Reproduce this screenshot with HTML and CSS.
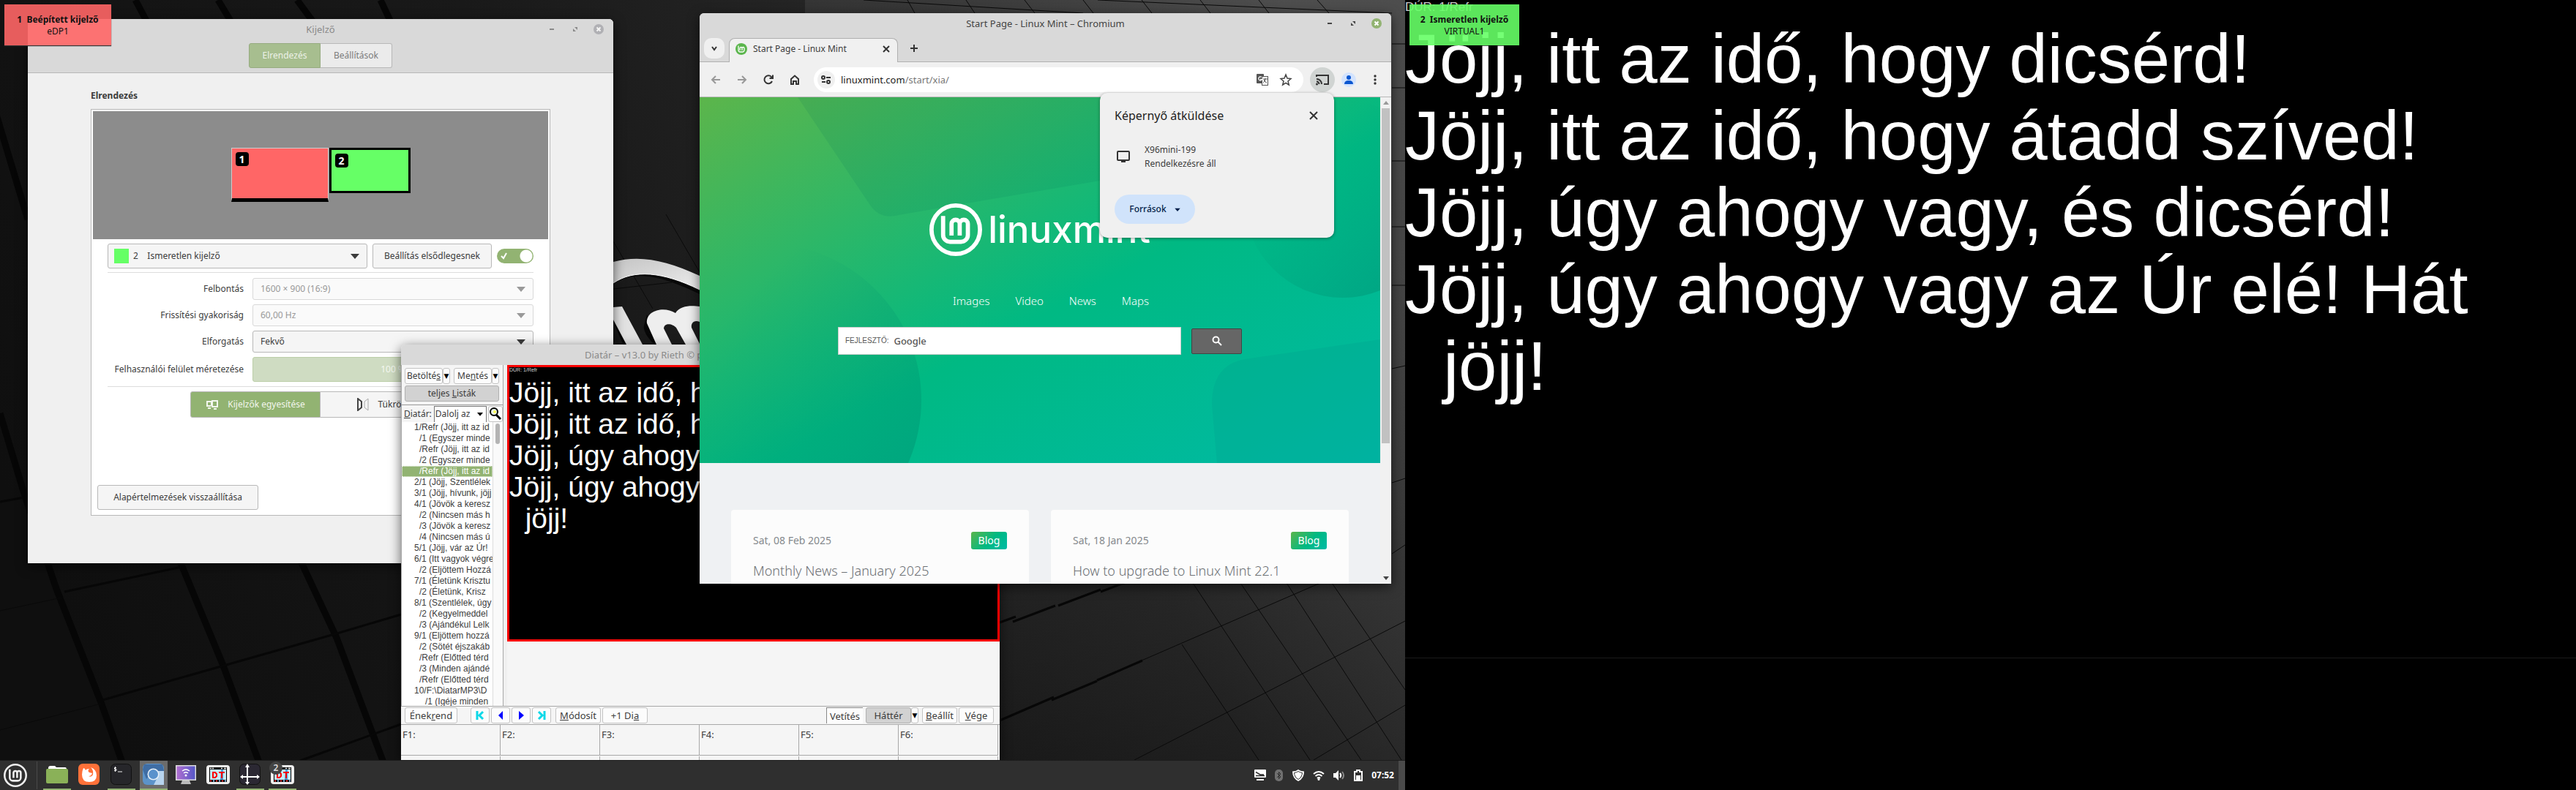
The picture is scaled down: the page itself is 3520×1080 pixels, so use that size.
FILE: index.html
```html
<!DOCTYPE html>
<html lang="hu">
<head>
<meta charset="utf-8">
<title>Asztal</title>
<link rel="stylesheet" href="styles.css">
</head>
<body>
<svg class="defs" width="0" height="0" aria-hidden="true">
  <symbol id="mint" viewBox="0 0 100 100">
    <g fill="none" stroke="currentColor" stroke-width="8" stroke-linecap="butt">
      <circle cx="50" cy="50" r="46"/>
      <path d="M26 24V60a13 13 0 0 0 13 13H60a13 13 0 0 0 13-13V39a7.75 7.75 0 0 0-15.500 0V61M57.500 39a7.750 7.750 0 0 0-15.500 0V61"/>
    </g>
  </symbol>
  <symbol id="tri" viewBox="0 0 12 8"><path d="M0 1h12L6 8z" fill="currentColor"/></symbol>
  <symbol id="dt" viewBox="0 0 32 28">
    <rect x="0" y="1" width="32" height="26" rx="4" fill="#eee"/>
    <rect x="4" y="4" width="24" height="20" fill="#000"/>
    <rect x="5" y="7" width="22" height="14" fill="#c4ecfa"/>
    <path d="M20 7h3v14h-4z" fill="#4d9fd8"/>
    <path d="M9 11h3l2 2v3l-2 2H9zM17 11h8M21 11v8" fill="none" stroke="#f00" stroke-width="2"/>
    <path d="M5 5.500h2M8 5.500h2M20 5.500h2M24 5.500h3" stroke="#fff" stroke-width="1.500"/>
    <path d="M5 22.500h2M13 22.500h2M21 22.500h2" stroke="#e33" stroke-width="2"/>
    <path d="M9 22.500h2M17 22.500h2M25 22.500h2" stroke="#9cf" stroke-width="2"/>
  </symbol>
</svg>

<main class="desk">
<section class="screen screen-main">
  <svg class="wallpaper" viewBox="0 0 1920 1080" preserveAspectRatio="xMidYMid slice" aria-hidden="true">
    <defs>
      <linearGradient id="wall" x1="0" y1=".6" x2="1" y2=".35">
        <stop offset="0" stop-color="#0f0f0f"/><stop offset=".45" stop-color="#191919"/>
        <stop offset=".75" stop-color="#282828"/><stop offset="1" stop-color="#454545"/>
      </linearGradient>
      <linearGradient id="fade" x1="0" y1="0" x2="0" y2="1">
        <stop offset="0" stop-color="#666" stop-opacity=".25"/><stop offset=".4" stop-color="#444" stop-opacity=".1"/><stop offset="1" stop-color="#000" stop-opacity=".25"/>
      </linearGradient>
      <linearGradient id="steel" x1="0" y1="0" x2="1" y2="1">
        <stop offset="0" stop-color="#c4c4c4"/><stop offset="1" stop-color="#ededed"/>
      </linearGradient>
    </defs>
    <rect width="1920" height="1080" fill="url(#wall)"/>
    <rect x="1100" width="820" height="1080" fill="url(#fade)"/>
    <g fill="none" stroke="#060606" stroke-width="9">
      <path d="M0 565L33 675L77 805L138 960L168 1045M185 0l16 30M298 0l18 30M406 0l22 30M520 0l14 30"/>
      <path d="M245 765L305 910L355 1045M410 765L460 872L525 1045M-4 160L38 300"/>
    </g>
    <g fill="none" stroke="#070707" stroke-width="3">
      <path d="M88 809L248 775M140 957L302 911L457 867L548 840M410 1040L548 990M0 686L33 680M1366 851l22-8M1384 850l58-22M1446 828l58-22M1504 809l34-13"/>
      <path d="M1366 985l74-32M1437 957l62-26M1499 930l62-27"/>
    </g>
    <g fill="none" stroke="#0a0a0a" stroke-width="1">
      <path d="M0 835L84 817M0 998L138 962M1560 903L1804 797M1550 1039L1920 849M1795 1039L1920 964M1630 797L1790 1039M1695 797L1860 1039M1758 797L1915 1039M1820 797L1920 943M1615 881L1720 1039M1902 660L1920 654M1902 757L1920 745M1902 504L1920 500M1180 0L1480 18M1500 0L1902 18M1902 60h18M1902 120h18M1902 220h18M1902 310h18M1902 390h18M910 293L956 372M838 330L892 422M838 395L918 386"/>
      <path d="M1240 0l10 18M1320 0l12 18M1400 0l14 18M1480 0l14 18M1560 0l14 18M1640 0l14 18M1720 0l14 18M1800 0l16 18"/>
    </g>
    <path d="M838 388C866 370 900 375 956 402V388C906 364 870 362 838 380Z" fill="#080808"/>
    <path d="M838 358C875 348 910 356 956 377V396C905 371 866 368 838 387Z" fill="url(#steel)"/>
    <path d="M838 387C866 368 905 371 956 396" fill="none" stroke="#fff" stroke-width="1"/>
    <path d="M838 440L852 472H862L845 430ZM880 445Q878 455 895 472H906L884 430Z" fill="#070707"/>
    <path d="M838 420L850 419L878 471H856L838 437Z" fill="#e2e2e2"/>
    <path d="M884 442C882 424 908 418 923 428C930 416 948 418 956 419V440C948 437 944 442 945 448L956 470V471H937L924 448C920 443 908 440 907 449L918 471H897Z" fill="#eee"/>
  </svg>

  <!-- Display settings -->
  <article class="window settings">
    <header class="settings-head">
      <div class="titlebar faded">
        <h1>Kijelző</h1>
        <div class="wm">
          <button aria-label="Kis méret"><svg width="16" height="16"><path d="M5 8h6" stroke="currentColor" stroke-width="2"/></svg></button>
          <button aria-label="Teljes méret"><svg width="16" height="16"><path d="M7 5h4v4zM9 11H5V7z" fill="currentColor"/></svg></button>
          <button aria-label="Bezárás"><svg width="16" height="16"><circle cx="8" cy="8" r="7" fill="#b0b0b4"/><path d="M5.500 5.500l5 5m0-5l-5 5" stroke="#f4f4f4" stroke-width="2"/></svg></button>
        </div>
      </div>
      <div class="switcher"><button class="on">Elrendezés</button><button>Beállítások</button></div>
    </header>
    <div class="settings-body">
      <h2>Elrendezés</h2>
      <div class="frame">
        <div class="canvas">
          <div class="mon mon-1"><b>1</b></div>
          <div class="mon mon-2"><b>2</b></div>
        </div>
        <div class="form">
          <div class="row-top">
            <label class="combo"><i class="swatch"></i><select aria-label="Kijelző"><option>2 &nbsp;&nbsp; Ismeretlen kijelző</option></select><svg class="caret"><use href="#tri"/></svg></label>
            <button class="btn">Beállítás elsődlegesnek</button>
            <label class="toggle"><input type="checkbox" checked aria-label="Kijelző bekapcsolva"><svg width="10" height="10"><path d="M1 5l3 3 4-7" fill="none" stroke="#fff" stroke-width="2"/></svg></label>
          </div>
          <div class="fields">
            <label for="res">Felbontás</label>
            <div class="combo off"><select id="res" disabled><option>1600 × 900 (16:9)</option></select><svg class="caret"><use href="#tri"/></svg></div>
            <label for="rate">Frissítési gyakoriság</label>
            <div class="combo off"><select id="rate" disabled><option>60,00 Hz</option></select><svg class="caret"><use href="#tri"/></svg></div>
            <label for="rot">Elforgatás</label>
            <div class="combo"><select id="rot"><option>Fekvő</option></select><svg class="caret"><use href="#tri"/></svg></div>
            <label for="scale">Felhasználói felület méretezése</label>
            <button id="scale" class="scale" disabled>100 %</button>
          </div>
          <div class="modes">
            <button class="on"><svg width="18" height="14"><path d="M7 9H2V3h6v6M9 2h7v8H9zM3 12h4M11 13h4" fill="none" stroke="currentColor" stroke-width="2"/></svg>Kijelzők egyesítése</button>
            <button><svg width="18" height="18"><path d="M2 1v16l5-4V5z" fill="none" stroke="#444" stroke-width="2"/><path d="M16 1v16l-5-4V5z" fill="none" stroke="#aaa"/></svg>Tükrözés</button>
          </div>
        </div>
        <button class="btn reset">Alapértelmezések visszaállítása</button>
      </div>
    </div>
  </article>

  <!-- Diatár -->
  <article class="window diatar">
    <header class="titlebar faded"><h1>Diatár – v13.0 by Rieth © polyjoe</h1></header>
    <div class="d-main">
      <aside class="d-side">
        <div class="d-tools">
          <div class="d-line"><button class="b w52">Betölté<u>s</u></button><button class="b drop">▼</button><span class="sp"></span><button class="b w52">Me<u>n</u>tés</button><button class="b drop">▼</button></div>
          <button class="b pressed full">teljes&nbsp;<u>L</u>isták</button>
        </div>
        <div class="d-pick">
          <label for="book"><u>D</u>iatár:</label>
          <span class="pick"><select id="book"><option>Dalolj az</option></select><svg class="caret"><use href="#tri"/></svg></span>
          <button class="b find" aria-label="Keresés"><svg width="18" height="18"><path d="M10 10l6 6" stroke="#000" stroke-width="3"/><circle cx="7" cy="6" r="5" fill="#e8f4e8" stroke="#000" stroke-width="2"/><circle cx="8" cy="6" r="2" fill="#ff5"/></svg></button>
        </div>
        <div class="d-listwrap">
          <ul class="d-list" role="listbox" aria-label="Diák">
            <li>1/Refr (Jöjj, itt az id</li><li class="s">/1 (Egyszer minde</li><li class="s">/Refr (Jöjj, itt az id</li><li class="s">/2 (Egyszer minde</li><li class="s sel" role="option" aria-selected="true">/Refr (Jöjj, itt az id</li>
            <li>2/1 (Jöjj, Szentlélek</li><li>3/1 (Jöjj, hívunk, jöjj</li><li>4/1 (Jövök a keresz</li><li class="s">/2 (Nincsen más h</li><li class="s">/3 (Jövök a keresz</li><li class="s">/4 (Nincsen más ú</li><li>5/1 (Jöjj, vár az Úr!</li><li>6/1 (Itt vagyok végre</li><li class="s">/2 (Eljöttem Hozzá</li><li>7/1 (Életünk Krisztu</li><li class="s">/2 (Életünk, Krisz</li><li>8/1 (Szentlélek, úgy</li><li class="s">/2 (Kegyelmeddel</li><li class="s">/3 (Ajándékul Lelk</li><li>9/1 (Eljöttem hozzá</li><li class="s">/2 (Sötét éjszakáb</li><li class="s">/Refr (Előtted térd</li><li class="s">/3 (Minden ajándé</li><li class="s">/Refr (Előtted térd</li><li>10/F:\DiatarMP3\D</li><li class="ss">/1 (Igéje minden</li>
          </ul>
          <div class="d-scroll"><i></i></div>
        </div>
      </aside>
      <div class="d-view">
        <div class="slide small">
          <p class="tag">DÚR: 1/Refr</p>
          <p class="verse">Jöjj, itt az idő, hogy dicsérd!
Jöjj, itt az idő, hogy átadd szíved!
Jöjj, úgy ahogy vagy, és dicsérd!
Jöjj, úgy ahogy vagy az Úr elé! Hát
  jöjj!</p>
        </div>
      </div>
    </div>
    <div class="d-bar">
      <button class="b w72">Ének<u>r</u>end</button>
      <div class="nav4">
        <button class="b w26" aria-label="Első"><svg width="12" height="14"><path d="M2 1v12M10 2L5 7l5 5" fill="none" stroke="#0cd8e8" stroke-width="3"/></svg></button>
        <button class="b w26" aria-label="Előző"><svg width="12" height="14"><path d="M9 1v12L3 7z" fill="#00f"/></svg></button>
        <button class="b w26" aria-label="Következő"><svg width="12" height="14"><path d="M3 1v12l7-6z" fill="#00f"/></svg></button>
        <button class="b w26" aria-label="Utolsó"><svg width="12" height="14"><path d="M10 1v12M2 2l5 5-5 5" fill="none" stroke="#0cd8e8" stroke-width="3"/></svg></button>
      </div>
      <button class="b w62"><u>M</u>ódosít</button><button class="b w62">+1&nbsp;Di<u>a</u></button>
      <span class="grow"></span>
      <button class="sunk">Vetítés</button><div class="pair"><button class="b pressed w62">Háttér</button><button class="b drop">▼</button></div>
      <button class="b w48"><u>B</u>eállít</button><button class="b w48"><u>V</u>ége</button>
    </div>
    <div class="d-keys"><span>F1:</span><span>F2:</span><span>F3:</span><span>F4:</span><span>F5:</span><span>F6:</span><span></span><span></span><span></span><span></span><span></span><span></span></div>
  </article>

  <!-- Chromium -->
  <article class="window chromium">
    <header class="titlebar">
      <h1>Start Page - Linux Mint – Chromium</h1>
      <div class="wm">
        <button aria-label="Kis méret"><svg width="16" height="16"><path d="M5 8h6" stroke="currentColor" stroke-width="2"/></svg></button>
        <button aria-label="Teljes méret"><svg width="16" height="16"><path d="M7 5h4v4zM9 11H5V7z" fill="currentColor"/></svg></button>
        <button aria-label="Bezárás"><svg width="16" height="16"><circle cx="8" cy="8" r="7" fill="#92b372"/><path d="M5.500 5.500l5 5m0-5l-5 5" stroke="#fff" stroke-width="2"/></svg></button>
      </div>
    </header>
    <div class="tabs">
      <button class="tabmenu" aria-label="Lapok keresése"><svg width="10" height="10"><path d="M2 3l3 4 3-4" fill="none" stroke="#333" stroke-width="2"/></svg></button>
      <div class="tab"><span class="fav"><svg width="16" height="16" viewBox="0 0 16 16"><path d="M4 3.500v6a2.500 2.500 0 0 0 2.500 2.500h3a2.500 2.500 0 0 0 2.500-2.500V7a1.500 1.500 0 0 0-3 0v3M9 7a1.500 1.500 0 0 0-3 0v3" fill="none" stroke="#fff" stroke-width="1.300"/></svg></span><span class="tabname">Start Page - Linux Mint</span><button aria-label="Lap bezárása"><svg width="10" height="10"><path d="M1 1l8 8M9 1L1 9" stroke="#333" stroke-width="2"/></svg></button></div>
      <button class="plus" aria-label="Új lap"><svg width="12" height="12"><path d="M6 1v10M1 6h10" stroke="#333" stroke-width="2"/></svg></button>
    </div>
    <div class="toolbar">
      <div class="navs">
        <button class="dim" aria-label="Vissza"><svg width="16" height="16"><path d="M14 8H3M8 3L3 8l5 5" fill="none" stroke="currentColor" stroke-width="2"/></svg></button>
        <button class="dim" aria-label="Előre"><svg width="16" height="16"><path d="M2 8h11M8 3l5 5-5 5" fill="none" stroke="currentColor" stroke-width="2"/></svg></button>
        <button aria-label="Újratöltés"><svg width="16" height="16"><path d="M13 10a5.500 5.500 0 1 1-1-6l1.500 1.500M14 1.500V6H9.500" fill="none" stroke="currentColor" stroke-width="2"/></svg></button>
        <button aria-label="Kezdőlap"><svg width="16" height="16"><path d="M3 7l5-4.500L13 7v7h-3v-4H6v4H3z" fill="none" stroke="currentColor" stroke-width="2"/></svg></button>
      </div>
      <div class="omni">
        <button class="site" aria-label="Webhelyadatok"><svg width="14" height="14"><g fill="none" stroke="#333" stroke-width="2"><circle cx="3" cy="4" r="2"/><path d="M7 4h6M1 10h5"/><circle cx="10" cy="10" r="2"/></g></svg></button>
        <label class="url">linuxmint.com<span>/start/xia/</span></label>
        <button aria-label="Fordítás"><svg width="18" height="18"><rect x="1" y="1" width="10" height="13" rx="1" fill="#555"/><rect x="8.500" y="4.500" width="8" height="12" fill="#fff" stroke="#555"/><path d="M8 5.500a2.500 2.500 0 1 0 .5 3H6" fill="none" stroke="#fff" stroke-width="1.300"/><path d="M10 8h6M13 7v1q-1 4-3 5M11 9q2 4 4 4" fill="none" stroke="#555"/></svg></button>
        <button aria-label="Könyvjelző"><svg width="18" height="18"><path d="M9 2l2 5 5 .5-4 3.500 1.300 5L9 13.300 4.700 16 6 11 2 7.500 7 7z" fill="none" stroke="#444" stroke-width="1.500"/></svg></button>
      </div>
      <button class="cast" aria-label="Átküldés"><svg width="18" height="16"><path d="M1 4V2h16v12h-6M1 7a7 7 0 0 1 7 7M1 10.500A3.500 3.500 0 0 1 4.500 14" fill="none" stroke="#333" stroke-width="2"/><circle cx="1.500" cy="14" r="1.500" fill="#333"/></svg></button>
      <button class="profile" aria-label="Profil"><svg width="14" height="14"><circle cx="7" cy="4" r="3" fill="#0b57d0"/><path d="M1 13q0-5 6-5t6 5z" fill="#0b57d0"/></svg></button>
      <button class="dots" aria-label="Menü"><svg width="4" height="16"><g fill="#333"><circle cx="2" cy="3" r="1.700"/><circle cx="2" cy="8" r="1.700"/><circle cx="2" cy="13" r="1.700"/></g></svg></button>
    </div>
    <div class="view">
      <div class="page">
        <section class="hero">
          <svg class="deco" viewBox="0 0 930 500" preserveAspectRatio="none" aria-hidden="true">
            <defs>
              <linearGradient id="d1" x1="0" y1="0" x2=".3" y2="1"><stop offset="0" stop-color="#006a50" stop-opacity=".12"/><stop offset="1" stop-color="#007a5c" stop-opacity=".14"/></linearGradient>
              <linearGradient id="d2" x1="0" y1="0" x2="1" y2="1"><stop offset=".3" stop-color="#00906e" stop-opacity="0"/><stop offset="1" stop-color="#00866a" stop-opacity=".5"/></linearGradient>
            </defs>
            <path d="M134 0L232 146Q246 168 272 161L547 114L760 70L740 0Z" fill="url(#d1)"/>
            <circle cx="89" cy="414" r="214" fill="url(#d2)"/>
            <circle cx="879" cy="139" r="135" fill="url(#d2)"/>
            <path d="M707 500L700 420Q700 366 745 358L930 331V500Z" fill="#00958a" fill-opacity=".2"/>
          </svg>
          <div class="brand"><svg width="72" height="72"><use href="#mint"/></svg><span>linuxmint</span></div>
          <nav><a href="#">Images</a><a href="#">Video</a><a href="#">News</a><a href="#">Maps</a></nav>
          <form class="search">
            <label class="q"><span>FEJLESZTŐ:</span><b>Google</b><input type="text" aria-label="Keresés"></label>
            <button type="button" aria-label="Keresés"><svg width="14" height="14"><circle cx="5.500" cy="5.500" r="4" fill="none" stroke="#fff" stroke-width="2"/><path d="M8.500 8.500l4.500 4.500" stroke="#fff" stroke-width="2"/></svg></button>
          </form>
        </section>
        <section class="cards">
          <div class="card"><div class="meta"><time>Sat, 08 Feb 2025</time><a href="#">Blog</a></div><h3>Monthly News – January 2025</h3></div>
          <div class="card"><div class="meta"><time>Sat, 18 Jan 2025</time><a href="#">Blog</a></div><h3>How to upgrade to Linux Mint 22.1</h3></div>
        </section>
      </div>
      <div class="vbar"><svg width="8" height="5"><path d="M0 5h8L4 0z" fill="#999"/></svg><i></i><svg width="8" height="5"><path d="M0 0h8L4 5z" fill="#444"/></svg></div>
    </div>
    <div class="castbox" role="dialog" aria-label="Képernyő átküldése">
      <div class="cast-head"><h2>Képernyő átküldése</h2><button aria-label="Bezárás"><svg width="12" height="12"><path d="M1 1l10 10M11 1L1 11" stroke="#333" stroke-width="2"/></svg></button></div>
      <button class="device"><svg width="18" height="16"><rect x="1" y="1" width="16" height="12" rx="1" fill="none" stroke="#333" stroke-width="2"/><path d="M6 15h6" stroke="#333" stroke-width="2"/></svg><span>X96mini-199<br>Rendelkezésre áll</span></button>
      <button class="sources">Források<svg width="8" height="5"><use href="#tri"/></svg></button>
    </div>
  </article>

  <aside class="osd red"><b>1&nbsp; Beépített kijelző</b><span>eDP1</span></aside>

  <footer class="taskbar">
    <button class="menu" aria-label="Menü"><svg width="32" height="32"><use href="#mint"/></svg></button>
    <div class="apps">
      <button class="run" aria-label="Fájlok"><svg width="30" height="30"><path d="M3 6q0-3 3-3h6l2 2h12q2 0 2 3v6H3z" fill="#fff"/><rect y="7" width="30" height="20" rx="2" fill="#8ab158"/></svg></button>
      <button aria-label="Firefox"><svg width="30" height="30"><rect width="29" height="29" rx="6" fill="#ff7139"/><path d="M7 6q2 0 3 3 1-2 5-2-3 3 0 5l4 1q-1 4-5 4 4 2 6-2 1-6-3-10 8 3 8 11 0 9-10 9T5 15q0-5 2-9z" fill="#fff"/></svg></button>
      <button class="run" aria-label="Terminál"><svg width="30" height="30"><rect x=".5" y=".5" width="28" height="28" rx="6" fill="#26262a" stroke="#111"/><path d="M8 5.500H5.500v2H8v2H5M6.500 4v7M10 11h6" fill="none" stroke="#eee"/></svg></button>
      <button class="run act" aria-label="Chromium"><svg width="30" height="30"><rect width="29" height="29" rx="6" fill="#5c93c9"/><path d="M2 1h25l2 9H14L5 21 0 8z" fill="#3f6da4"/><path d="M29 10v19H15l6-12-2-7z" fill="#b7d4ee"/><circle cx="14.500" cy="14.500" r="8" fill="#e7f0f8"/><circle cx="14.500" cy="14.500" r="6.500" fill="#5a92cc"/></svg></button>
      <button aria-label="Hálózati kijelző"><svg width="30" height="30"><defs><linearGradient id="vi"><stop offset="0" stop-color="#b06fd0"/><stop offset="1" stop-color="#5557c8"/></linearGradient></defs><rect x="1" y="2" width="28" height="21" fill="#ddd"/><rect x="2.500" y="3.500" width="25" height="18" fill="url(#vi)"/><path d="M10 23h10l2 5H8z" fill="#bbb"/><path d="M10 10q5-4 10 0M12 13q3-2.500 6 0" fill="none" stroke="#fff" stroke-width="1.500"/><circle cx="15" cy="16" r="1.500" fill="#fff"/></svg></button>
      <button aria-label="Diatár"><svg width="32" height="28"><use href="#dt"/></svg></button>
      <button class="run" aria-label="Kijelző"><svg width="30" height="30"><rect x=".5" y=".5" width="28" height="28" rx="6" fill="#2b2833" stroke="#111"/><path d="M11 3v23M3 18h23" stroke="#fff" stroke-width="2"/><path d="M11 0l3 5H8zM11 29l3-4H8zM1 18l4-3v6zM28 18l-4-3v6z" fill="#fff"/></svg></button>
      <button class="run" aria-label="Diatár, 2 ablak"><svg width="32" height="28"><use href="#dt"/></svg><span class="count">2</span></button>
    </div>
    <div class="tray">
      <svg width="16" height="16"><rect y="0" width="16" height="11" rx="1" fill="#fff"/><path d="M2 3.500l6 3.500h5M2 8.500h12" stroke="#2f2f2f" fill="none" stroke-width="1.500"/><path d="M3 14h10" stroke="#fff" stroke-width="2"/></svg>
      <svg width="12" height="16"><rect width="11" height="16" rx="5" fill="#707070"/><path d="M3 5l5 5-2.500 2.500v-9L8 6l-5 5" fill="none" stroke="#2f2f2f"/></svg>
      <svg width="16" height="16"><path d="M8 0q3 2.500 8 2.500Q16 12 8 16 0 12 0 2.500 5 2.500 8 0z" fill="#fff"/><path d="M8 2.500q2 1.500 5.500 2Q13 11 8 13.500 3 11 2.500 4.500 6 4 8 2.500z" fill="#fff" stroke="#2f2f2f"/></svg>
      <svg width="16" height="16"><g fill="none" stroke="#fff" stroke-width="2"><path d="M1 6q7-6 14 0M3.500 9q4.500-4 9 0M6 12q2-2 4 0"/></g><circle cx="8" cy="13.500" r="1.500" fill="#fff"/></svg>
      <svg width="16" height="16"><path d="M0 5h3l4-4v14l-4-4H0z" fill="#fff"/><path d="M9 5q2.500 3 0 6" fill="none" stroke="#fff" stroke-width="2"/><path d="M12 3q4 5 0 10" fill="none" stroke="#888" stroke-width="2"/></svg>
      <svg width="12" height="16"><path d="M1 3h3V1h4v2h3v12H1z" fill="none" stroke="#fff" stroke-width="2"/><rect x="3" y="8" width="6" height="6" fill="#fff"/></svg>
      <time>07:52</time>
    </div>
    <button class="edge" aria-label="Asztal megjelenítése"></button>
  </footer>
</section>

<section class="screen screen-out">
  <div class="slide">
    <p class="tag">DÚR: 1/Refr</p>
    <p class="verse">Jöjj, itt az idő, hogy dicsérd!
Jöjj, itt az idő, hogy átadd szíved!
Jöjj, úgy ahogy vagy, és dicsérd!
Jöjj, úgy ahogy vagy az Úr elé! Hát
  jöjj!</p>
  </div>
  <aside class="osd green"><b>2&nbsp; Ismeretlen kijelző</b><span>VIRTUAL1</span></aside>
</section>
</main>
</body>
</html>
```

FILE: styles.css
```css
* { box-sizing: border-box; }
body { margin: 0; background: #000; color: #3c3c3c; font: 12px/16px "Noto Sans", "Open Sans", sans-serif; }
h1, h2, h3, p, ul { margin: 0; padding: 0; font-weight: 400; }
button, select, input { font: inherit; color: inherit; margin: 0; padding: 0; border: 0; background: none; appearance: none; }
button { display: flex; align-items: center; justify-content: center; white-space: nowrap; }
svg { display: block; flex: none; }
.defs { position: absolute; }

.desk { display: grid; grid-template-columns: 6fr 5fr; min-height: 100vh; }
.screen { position: relative; overflow: hidden; }
.screen-main { display: flex; flex-direction: column; justify-content: flex-end; background: #161616; }
.wallpaper { position: absolute; inset: 0; width: 100%; height: 100%; }

/* Windows */
.window { position: absolute; display: flex; flex-direction: column; overflow: hidden; border-radius: 6px 6px 0 0; box-shadow: 0 4px 16px rgba(0, 0, 0, .6); }
.titlebar { position: relative; display: flex; align-items: center; justify-content: center; color: #444; background: #d9d9d9; }
.titlebar h1 { font-size: 13px; line-height: 16px; }
.faded { color: #8a8a8a; }
.wm { position: absolute; right: 12px; display: flex; gap: 16px; }

/* Display settings */
.settings { left: 38px; top: 26px; width: 800px; height: 744px; background: #f0f0f0; }
.settings-head { height: 74px; background: #d9d9d9; border-bottom: 1px solid #b8b8b8; }
.settings-head .titlebar { height: 28px; margin-bottom: 5px; }
.switcher { display: flex; justify-content: center; }
.switcher button { width: 98px; height: 34px; border: 1px solid #b8b8b8; background: #ebebeb; color: #7c7c7c; border-radius: 0 3px 3px 0; border-left: 0; }
.switcher button.on { background: #a7be8f; color: #edf2e8; border: 1px solid #96ab80; border-radius: 3px 0 0 3px; }
.settings-body { padding: 22px 86px 0; }
.settings-body h2 { font-size: 12px; font-weight: 700; line-height: 18px; margin-bottom: 9px; }
.frame { height: 556px; border: 1px solid #b8b8b8; background: #fff; display: flex; flex-direction: column; padding: 2px; }
.canvas { height: 175px; background: #8c8c8c; display: flex; justify-content: center; gap: 1px; padding-top: 50px; }
.mon { padding: 6px; }
.mon b { display: block; width: 18px; height: 19px; border-radius: 4px; background: #000; color: #fff; text-align: center; font-size: 14px; line-height: 19px; }
.mon-1 { width: 133px; height: 74px; background: #f66; border: 1px solid #ccc; border-width: 1px 1px 5px; border-bottom-color: #000; padding: 5px; }
.mon-2 { width: 111px; height: 62px; background: #6f6; border: 3px solid #000; padding: 5px; }
.form { padding: 6px 20px 0; }
.row-top { display: flex; align-items: center; gap: 7px; padding-bottom: 5px; border-bottom: 1px solid #ddd; }
.row-top .combo { flex: 1; height: 34px; }
.combo { display: flex; align-items: center; height: 30px; padding: 0 10px; border: 1px solid #b8b8b8; border-radius: 3px; background: #f5f5f5; }
.combo select { flex: 1; min-width: 0; opacity: 1; }
.combo.off { color: #999; border-color: #d9d9d9; background: #fafafa; }
.row-top .combo { padding-left: 8px; }
.swatch { width: 20px; height: 20px; margin-right: 6px; background: #6f6; }
.caret { width: 12px; height: 8px; }
.btn { height: 34px; padding: 0 15px; border: 1px solid #b8b8b8; border-radius: 3px; background: #f5f5f5; }
.reset { width: 220px; }
.toggle { position: relative; }
.toggle input { display: block; width: 50px; height: 20px; border-radius: 10px; background: radial-gradient(circle at 40px 10px, #fff 8px, #92b372 9px); }
.toggle svg { position: absolute; left: 5px; top: 5px; }
.fields { display: grid; grid-template-columns: 186px 1fr; gap: 6px 12px; align-items: center; padding: 7px 0 6px; border-bottom: 1px solid #ddd; }
.fields label { text-align: right; white-space: nowrap; }
.scale { height: 34px; border: 1px solid #bccfa8; border-radius: 3px; background: #cfdcc2; color: #f4f8f0; }
.modes { display: flex; justify-content: center; padding-top: 6px; }
.modes button { width: 178px; height: 36px; gap: 12px; border: 1px solid #b8b8b8; border-left: 0; background: #f5f5f5; }
.modes button.on { background: #92b372; color: #f2f6ee; border: 1px solid #b8b8b8; border-radius: 3px 0 0 3px; }
.reset { align-self: flex-start; margin: auto 0 5px 6px; }

/* Diatár */
.diatar { left: 548px; top: 471px; width: 818px; height: 569px; background: #f5f5f5; }
.diatar > .titlebar { height: 28px; justify-content: flex-start; padding-left: 251px; }
.d-main { flex: 1; display: flex; gap: 5px; min-height: 0; background: #f0f0f0; }
.d-side { width: 140px; display: flex; flex-direction: column; border-right: 1px solid #a8a8a8; border-left: 1px solid #a8a8a8; background: #f5f5f5; font-size: 12px; }
.b { height: 22px; border: 1px solid #c4c4c4; border-radius: 3px; background: #fcfcfc; font-size: 12px; }
.d-bar .b, .d-bar .sunk { font-size: 13px; }
.pressed { background: #d2d2d2; border-color: #b0b0b0; }
.w52 { width: 52px; } .w72 { width: 72px; } .w26 { width: 26px; } .w62 { width: 62px; } .w48 { width: 48px; }
.d-side .drop, .d-bar .drop { width: 10px; overflow: hidden; color: #000; font: 9px/16px "DejaVu Sans", sans-serif; }
.full { width: 100%; }
.d-tools { padding: 4px 5px 4px 4px; border-bottom: 1px solid #999; display: grid; gap: 2px; }
.d-line { display: flex; }
.sp { flex: 1; }
.d-pick { display: flex; align-items: center; height: 23px; padding-left: 3px; }
.pick { display: flex; align-items: center; flex: 1; height: 22px; margin: 0 2px 0 3px; padding: 0 4px 0 1px; border: 1px solid #777; border-width: 1px 1px 0 1px; background: #fff; }
.pick select { width: 100%; min-width: 0; overflow: hidden; }
.pick .caret { width: 8px; height: 6px; color: #000; }
.find { width: 20px; }
.d-listwrap { flex: 1; display: flex; min-height: 0; background: #fff; }
.d-list { flex: 1; overflow: hidden; list-style: none; font: 12px/15px "Liberation Sans", Arial, sans-serif; }
.d-list li { padding-left: 17px; white-space: nowrap; height: 15px; }
.d-list .s { padding-left: 24px; }
.d-list .ss { padding-left: 32px; }
.d-list .sel { background: #92b372; color: #fff; outline: 1px dotted #fff; outline-offset: -1px; }
.d-scroll { width: 14px; border-left: 1px solid #ddd; background: #fafafa; padding: 2px 4px 0 3px; }
.d-scroll i { display: block; width: 6px; height: 28px; border-radius: 3px; background: #b4b4b4; }
.d-view { flex: 1; min-width: 0; background: #f5f5f5; }
.d-bar { display: flex; align-items: center; gap: 2px; height: 26px; padding: 0 8px 0 5px; border-top: 1px solid #a8a8a8; border-bottom: 1px solid #a8a8a8; }
.nav4 { display: flex; gap: 2px; margin: 0 4px 0 16px; }
.grow { flex: 1; }
.pair { display: flex; margin: 0 3px 0 2px; }
.sunk { width: 50px; height: 22px; background: #fcfcfc; border: 1px solid #888; border-width: 1px 0 0 1px; }
.d-keys { display: grid; grid-template-columns: repeat(6, 136px); grid-template-rows: 42px 6px; row-gap: 1px; font-size: 13px; }
.d-keys span { padding: 5px 2px; border-right: 1px solid #a8a8a8; border-bottom: 1px solid #a8a8a8; }
.d-keys span:nth-child(n+7) { padding: 0; border-bottom: 0; }

/* Projected slide */
.slide { position: relative; color: #fff; background: #000; font-family: "Liberation Sans", Arial, sans-serif; }
.tag { font-size: 17px; line-height: 20px; opacity: .8; }
.verse { white-space: pre; font-size: 94px; line-height: 105px; margin-top: 8px; }
.screen-out { background: linear-gradient(#1b1b1b, #1b1b1b) 0 899px / 100% 1px no-repeat #000; }
.screen-out .slide { background: none; }
.slide.small { height: 378px; border: 3px solid #f00; overflow: hidden; }
.small .tag { font-size: 7px; line-height: 8px; }
.small .verse { font-size: 39px; line-height: 43px; margin-top: 5px; }

/* Chromium */
.chromium { left: 956px; top: 18px; width: 945px; height: 780px; background: #d9d9d9; font-size: 12px; }
.chromium > .titlebar { height: 28px; margin-bottom: 6px; }
.tabs { display: flex; align-items: flex-start; height: 33px; padding-left: 6px; background: #d9d9d9; border-bottom: 1px solid #b0b0b0; }
.tabmenu { width: 28px; height: 28px; border-radius: 10px; background: #f0f0f0; margin-right: 6px; }
.tab { display: flex; align-items: center; width: 231px; height: 33px; padding: 0 10px 4px 8px; gap: 8px; border: 1px solid #b0b0b0; border-bottom: 0; border-radius: 8px 8px 0 0; background: #f0f0f0; }
.tabname { flex: 1; }
.fav { width: 16px; height: 16px; border-radius: 8px; background: #5bb64d; }
.plus { width: 28px; height: 28px; margin-left: 8px; }
.toolbar { display: flex; align-items: center; height: 48px; padding: 0 20px 0 14px; background: #f0f0f0; border-bottom: 1px solid #b8b8b8; }
.navs { display: flex; gap: 20px; margin-right: 18px; color: #333; }
.dim { color: #999; }
.omni { flex: 1; display: flex; align-items: center; gap: 14px; height: 34px; padding: 0 15px 0 5px; border-radius: 17px; background: #fff; }
.site { width: 24px; height: 24px; border-radius: 12px; background: #f0f0f0; }
.url { flex: 1; margin-left: -6px; font-size: 13px; color: #222; }
.url span { color: #777; }
.cast { width: 34px; height: 34px; margin: 0 9px; border-radius: 17px; background: #d0d4d2; }
.profile { width: 20px; height: 20px; border-radius: 10px; background: #d3e3fd; margin-right: 24px; }
.view { flex: 1; display: flex; min-height: 0; background: #fff; }
.page { flex: 1; overflow: hidden; background: #eff1f3; font-size: 15px; }
.hero { position: relative; height: 500px; display: flex; flex-direction: column; align-items: center; padding-top: 145px; color: #fff; background: linear-gradient(to bottom right, #5cb54b, #00b983 55%, #00baa6); }
.deco { position: absolute; inset: 0; width: 100%; height: 100%; }
.brand, .hero nav, .search { position: relative; }
.brand { display: flex; align-items: center; gap: 8px; height: 72px; margin-bottom: 49px; }
.brand span { font: 500 51px/60px Inter, sans-serif; }
.hero nav { display: flex; gap: 35px; padding-left: 30px; margin-bottom: 24px; }
.hero nav a { color: #fff; text-decoration: none; line-height: 24px; font-weight: 300; }
.search { display: flex; align-items: center; gap: 14px; }
.q { display: flex; align-items: center; gap: 7px; width: 469px; height: 38px; padding: 0 9px; border: 1px solid #ccc; background: #fff; color: #555; font: 10px/16px "Liberation Sans", Arial, sans-serif; }
.q b { font: 500 13px/16px "Noto Sans", sans-serif; }
.q input { flex: 1; min-width: 0; }
.search button { width: 69px; height: 35px; border: 1px solid #444; border-radius: 2px; background: #666; }
.cards { display: grid; grid-template-columns: 1fr 1fr; gap: 30px; padding: 64px 43px 0; color: #85898d; }
.card { height: 150px; padding: 30px; border-radius: 4px; background: #fcfcfc; }
.meta { display: flex; justify-content: space-between; align-items: center; font-size: 14px; }
.meta time { line-height: 24px; }
.meta a { width: 49px; line-height: 24px; border-radius: 3px; text-align: center; color: #fff; text-decoration: none; background: linear-gradient(135deg, #5cb54b, #00b983 55%, #00baa6); }
.card h3 { font-size: 18px; line-height: 24px; margin-top: 17px; font-weight: 300; color: #6c7074; }
.vbar { width: 15px; display: flex; flex-direction: column; align-items: center; padding: 5px 0; background: #f1f1f1; }
.vbar i { width: 11px; height: 458px; margin: 5px 0 auto; background: #c1c1c1; }
.castbox { position: absolute; left: 547px; top: 109px; width: 320px; height: 198px; padding: 18px 20px; border-radius: 10px; background: #f0f0f0; box-shadow: 0 1px 4px rgba(0, 0, 0, .4); }
.cast-head { display: flex; justify-content: space-between; align-items: center; height: 26px; padding-right: 2px; }
.cast-head h2 { font-size: 16px; color: #222; }
.device { gap: 20px; margin: 24px 0 33px 3px; line-height: 19px; text-align: left; }
.sources { width: 110px; height: 40px; gap: 11px; border-radius: 20px; background: #d0e3fb; color: #041e49; font-weight: 500; }

/* Screen labels */
.osd { position: absolute; top: 6px; left: 6px; width: 146px; height: 56px; display: flex; flex-direction: column; align-items: center; padding-top: 13px; color: #111; font-size: 12px; line-height: 16px; white-space: nowrap; box-shadow: 0 1px 1px #333; }
.red { background: rgba(255, 102, 102, .9); }
.green { width: 150px; background: rgba(102, 255, 102, .9); box-shadow: none; }

/* Panel */
.taskbar { position: relative; display: flex; align-items: center; height: 41px; background: #2f2f2f; border-top: 1px solid #1c1c1c; color: #fff; }
.menu { width: 51px; height: 38px; padding-right: 9px; border-right: 1px solid #4a4a4a; color: #eee; }
.apps { display: flex; gap: 6px; margin: 0 auto 0 8px; align-self: stretch; }
.apps button { position: relative; width: 38px; border-bottom: 2px solid transparent; }
.apps .run { border-color: #92b372; }
.apps .act { background: #6c6c6c; }
.count { position: absolute; left: 1px; top: 1px; width: 18px; height: 18px; border-radius: 9px; background: #444; color: #ddd; font-weight: 600; line-height: 18px; }
.tray { display: flex; align-items: center; gap: 12px; }
.tray time { font-size: 12px; font-weight: 700; }
.edge { width: 9px; align-self: stretch; margin-left: 6px; background: #4a4a4a; }
```
